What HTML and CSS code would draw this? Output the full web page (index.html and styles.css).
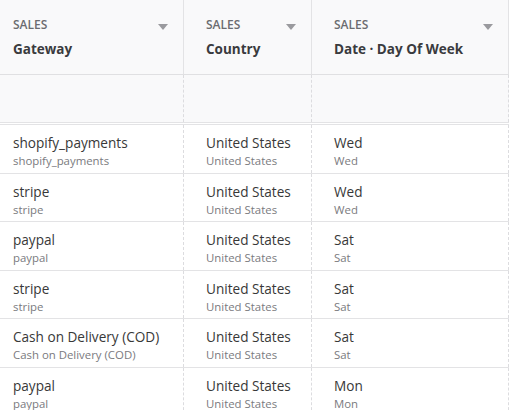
FILE: index.html
```html
<!DOCTYPE html>
<html lang="en">
<head>
  <meta charset="UTF-8" />
  <title>Sales by Gateway</title>
  <link rel="stylesheet" href="styles.css">
</head>
<body>
  <div class="table">
    <!-- Column headers -->
    <div class="row head">
      <div class="cell first"><span class="group">SALES</span><span class="name">Gateway</span><i class="caret"></i></div>
      <div class="cell"><span class="group">SALES</span><span class="name">Country</span><i class="caret"></i></div>
      <div class="cell"><span class="group">SALES</span><span class="name">Date · Day Of Week</span><i class="caret"></i></div>
    </div>

    <!-- Filter row (empty) -->
    <div class="row filter">
      <div class="cell first"></div>
      <div class="cell"></div>
      <div class="cell"></div>
    </div>

    <div class="body">
      <div class="row item">
        <div class="cell first"><span class="val">shopify_payments</span><span class="sub">shopify_payments</span></div>
        <div class="cell"><span class="val">United States</span><span class="sub">United States</span></div>
        <div class="cell"><span class="val">Wed</span><span class="sub">Wed</span></div>
      </div>
      <div class="row item">
        <div class="cell first"><span class="val">stripe</span><span class="sub">stripe</span></div>
        <div class="cell"><span class="val">United States</span><span class="sub">United States</span></div>
        <div class="cell"><span class="val">Wed</span><span class="sub">Wed</span></div>
      </div>
      <div class="row item">
        <div class="cell first"><span class="val">paypal</span><span class="sub">paypal</span></div>
        <div class="cell"><span class="val">United States</span><span class="sub">United States</span></div>
        <div class="cell"><span class="val">Sat</span><span class="sub">Sat</span></div>
      </div>
      <div class="row item">
        <div class="cell first"><span class="val">stripe</span><span class="sub">stripe</span></div>
        <div class="cell"><span class="val">United States</span><span class="sub">United States</span></div>
        <div class="cell"><span class="val">Sat</span><span class="sub">Sat</span></div>
      </div>
      <div class="row item">
        <div class="cell first"><span class="val">Cash on Delivery (COD)</span><span class="sub">Cash on Delivery (COD)</span></div>
        <div class="cell"><span class="val">United States</span><span class="sub">United States</span></div>
        <div class="cell"><span class="val">Sat</span><span class="sub">Sat</span></div>
      </div>
      <div class="row item">
        <div class="cell first"><span class="val">paypal</span><span class="sub">paypal</span></div>
        <div class="cell"><span class="val">United States</span><span class="sub">United States</span></div>
        <div class="cell"><span class="val">Mon</span><span class="sub">Mon</span></div>
      </div>
    </div>
  </div>
</body>
</html>
```

FILE: styles.css
```css
/* Base */
body {
  margin: 0;
  font-family: "Open Sans", "Noto Sans", sans-serif;
  background: #fff;
  color: #333;
  overflow: hidden;
}

.table {
  width: 509px;
}

.row {
  display: grid;
  grid-template-columns: 184px 128px 197px;
}

.cell {
  position: relative;
  border-right: 1px solid #e3e3e5;
  padding: 0 22px;
  display: flex;
  flex-direction: column;
  min-width: 0;
}

.cell.first {
  padding-left: 13px;
}

/* Header */
.head {
  background: #f9f9fa;
  height: 74px;
  border-bottom: 1px solid #e0e0e2;
}

.head .cell {
  padding-top: 15px;
}

.group {
  font-size: 12px;
  font-weight: 600;
  color: #6b6c70;
  line-height: 19px;
}

.name {
  font-size: 13.5px;
  font-weight: 700;
  color: #3a3b3e;
  line-height: 20px;
  margin-top: 5px;
  white-space: nowrap;
}

.caret {
  position: absolute;
  right: 15px;
  top: 24px;
  width: 0;
  height: 0;
  border-left: 5.5px solid transparent;
  border-right: 5.5px solid transparent;
  border-top: 6px solid #9a9a9e;
}

/* Filter row */
.filter {
  background: #f9f9fa;
  height: 47px;
  border-bottom: 1px solid #e3e3e5;
}

.filter .cell {
  border-right: 1px dashed #dcdcdf;
}

/* Body rows */
.body {
  border-top: 1px solid #e3e3e5;
  margin-top: 1px;
}

.item {
  height: 47.5px;
  border-bottom: 1px solid #e3e3e5;
}

.item .cell {
  border-right: 1px dashed #dcdcdf;
  padding-top: 9px;
}

.val {
  font-size: 13.6px;
  line-height: 18px;
  color: #383838;
  white-space: nowrap;
}

.sub {
  font-size: 11.4px;
  line-height: 17px;
  color: #7a7a7e;
  white-space: nowrap;
}
```
